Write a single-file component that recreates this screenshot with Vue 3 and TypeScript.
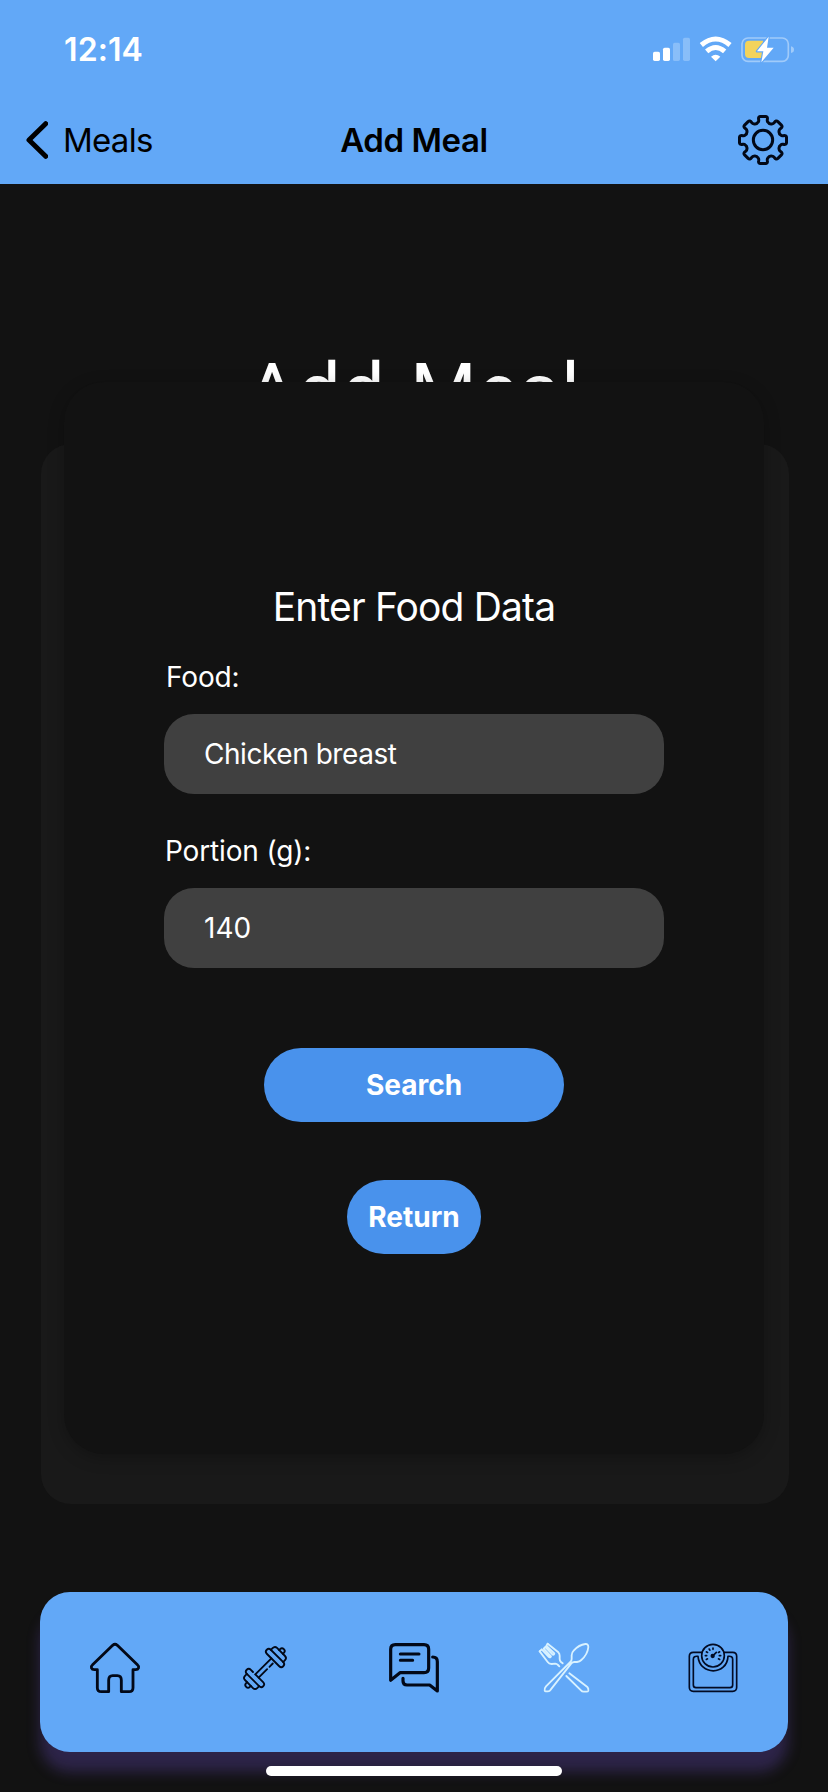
<script setup lang="ts">
import { ref } from 'vue'

const food = ref<string>('Chicken breast')
const portion = ref<string>('140')
const cogAngles: number[] = [0, 45, 90, 135, 180, 225, 270, 315]
const tickAngles: number[] = [-120, -90, -60, -30, 0, 60, 90, 120]

// One outline tooth spans 45 degrees of the cog; eight of them close the ring.
function cogPath(): string {
  const point = (radius: number, degrees: number): string => {
    const t = (degrees * Math.PI) / 180
    return `${(75 + radius * Math.sin(t)).toFixed(2)} ${(75 - radius * Math.cos(t)).toFixed(2)}`
  }
  const parts: string[] = []
  cogAngles.forEach((a, i) => {
    parts.push(`${i === 0 ? 'M' : 'L'}${point(56, a - 15)}`)
    parts.push(`Q${point(57, a - 12.5)} ${point(62, a - 12)}`)
    parts.push(`Q${point(72, a - 12)} ${point(71, a - 6)}`)
    parts.push(`L${point(71, a + 6)}`)
    parts.push(`Q${point(72, a + 12)} ${point(62, a + 12)}`)
    parts.push(`Q${point(57, a + 12.5)} ${point(56, a + 15)}`)
    parts.push(`Q${point(50, a + 22.5)} ${point(56, a + 30)}`)
  })
  return parts.join(' ') + 'Z'
}
</script>

<template>
  <div class="screen">
    <header class="top">
      <div class="status">
        <span class="time">12:14</span>
        <svg class="signals" viewBox="0 0 424 75" width="141.33" height="25">
          <g fill="#fff">
            <rect x="0" y="44" width="21" height="28" rx="5" />
            <rect x="30" y="32" width="21" height="40" rx="5" />
            <g opacity=".25">
              <rect x="60" y="17" width="21" height="55" rx="5" />
              <rect x="90" y="2" width="21" height="70" rx="5" />
            </g>
            <path d="M188 73 L174 59 Q188 48 202 59Z" />
          </g>
          <g fill="none" stroke="#fff" stroke-width="15">
            <path d="M145 24 Q188 -12 231 24" />
            <path d="M161 43 Q188 20 215 43" />
          </g>
          <rect x="267" y="3" width="139" height="70" rx="18" fill="none" stroke="#fff" stroke-opacity=".4" stroke-width="5" />
          <path d="M414 28 Q423 30 423 38 Q423 46 414 48Z" fill="#fff" opacity=".4" />
          <path d="M288 11 H330 V63 H288 Q276 63 276 51 V23 Q276 11 288 11Z" fill="#f3d35c" />
          <path d="M347 -1 L312 43 H331 L325 76 L362 32 H342Z" fill="#fff" stroke="#62a8f7" stroke-width="7" stroke-linejoin="round" paint-order="stroke" />
        </svg>
      </div>
      <nav class="titlebar">
        <button class="back" type="button">
          <svg viewBox="0 0 66 114" width="22" height="38">
            <path d="M59 8 L9 57 L59 106" fill="none" stroke="#000" stroke-width="15" stroke-linecap="round" stroke-linejoin="round" />
          </svg>
          <span>Meals</span>
        </button>
        <h1 class="heading">Add Meal</h1>
        <svg class="cog" viewBox="0 0 150 150" width="50" height="50">
          <g fill="none" stroke="#020817" stroke-width="9" stroke-linejoin="round">
            <path :d="cogPath()" />
            <circle cx="75" cy="75" r="29" />
          </g>
        </svg>
      </nav>
    </header>

    <main class="body">
      <h2 class="page-title">Add Meal</h2>
      <section class="card"></section>
      <form class="modal" @submit.prevent>
        <h3 class="form-title">Enter Food Data</h3>
        <label class="label" for="food">Food:</label>
        <input id="food" v-model="food" class="field" type="text" />
        <label class="label second" for="portion">Portion (g):</label>
        <input id="portion" v-model="portion" class="field number" type="text" />
        <button class="action search" type="submit">Search</button>
        <button class="action return" type="button">Return</button>
      </form>
    </main>

    <footer class="tabs">
      <svg class="tab" viewBox="0 0 150 150">
        <path d="M22 80 V134 Q22 146 34 146 H56 V112 Q56 98 68 98 H82 Q94 98 94 112 V146 H117 Q129 146 129 134 V80 H137 C146 80 149 71 143 66 L82 7 Q75 1 68 7 L7 66 C1 71 4 80 13 80Z" fill="none" stroke="#020817" stroke-width="8.5" stroke-linejoin="round" />
      </svg>
      <svg class="tab" viewBox="0 0 150 150">
        <g transform="translate(78 75) rotate(-45)" fill="none" stroke="#020817" stroke-width="5.5" stroke-linecap="round">
          <path d="M-34 -7 H34 M-34 7 H2 M12 7 H26" />
          <rect x="34" y="-35" width="17" height="70" rx="8.5" />
          <path d="M51 -26 H58 Q68 -26 68 -17 V17 Q68 26 58 26 H51" />
          <path d="M68 -8 H72 Q80 -8 80 0 Q80 8 72 8 H68" />
          <path d="M-34 -17 V-26 Q-34 -35 -42.5 -35 Q-51 -35 -51 -26 V26 Q-51 35 -42.5 35 Q-34 35 -34 26 V-7" />
          <path d="M-51 -26 H-58 Q-68 -26 -68 -17 V17 Q-68 26 -58 26 H-51" />
          <path d="M-68 -8 H-72 Q-80 -8 -80 0 Q-80 8 -72 8 H-68" />
        </g>
      </svg>
      <svg class="tab" viewBox="0 0 150 150">
        <g fill="none" stroke="#020817" stroke-width="9.5" stroke-linecap="round" stroke-linejoin="round">
          <path d="M5 112 V19 Q5 5 19 5 H105 Q119 5 119 19 V75 Q119 89 105 89 H33Z" />
          <path d="M34 33 H90 M34 52 H71" stroke-width="9" />
          <path d="M131 42 Q145 42 145 56 V144 L122 126 H54 Q42 126 42 114 V106" />
        </g>
      </svg>
      <svg class="tab" viewBox="0 0 150 150">
        <g fill="none" stroke="#d9f2ff" stroke-width="5.5" stroke-linecap="round" stroke-linejoin="round">
          <path d="M2 25 L26 57 Q30 63 38 63 L49 62 Q53 62 57 66 L61 70 M26 2 L58 28 Q62 32 62 38 V48 Q62 53 66 57 L71 61" />
          <path d="M2 25 L8 19 L30 42 Q35 45 36 40 L14 17 L19 12 L41 35 Q46 36 46 31 L22 8 L26 2" />
          <path d="M17 143 Q15 137 21 130 L94 57 Q98 53 98 48 V37 Q98 29 104 23 Q120 5 139 3 Q148 2 148 12 Q146 34 127 51 Q122 56 114 57 H106 Q101 57 97 61 L35 140 Q32 145 27 145 H20 Q18 145 17 143Z" />
          <path d="M91 91 L145 132 Q149 136 148 143 Q147 146 142 146 H134 Q129 146 126 142 L82 99" />
        </g>
      </svg>
      <svg class="tab" viewBox="0 0 150 150">
        <g fill="none" stroke="#020b24" stroke-width="5" stroke-linecap="round" stroke-linejoin="round">
          <path d="M42 28 H16 Q4 28 4 40 V133 Q4 145 16 145 H134 Q146 145 146 133 V40 Q146 28 134 28 H108" />
          <path d="M30 40 Q16 38 16 49 V126 Q16 134 24 134 H126 Q134 134 134 126 V49 Q134 38 120 40 C117 98 35 98 30 40Z" />
          <circle cx="75" cy="38" r="34" fill="#62a8f7" />
          <g v-for="angle in tickAngles" :key="angle" :transform="`rotate(${angle} 75 38)`">
            <path d="M75 15 V19" />
          </g>
          <path d="M75 38 L85 28" />
          <circle cx="74" cy="39" r="4" fill="#020b24" />
        </g>
      </svg>
    </footer>
    <div class="home-indicator"></div>
  </div>
</template>

<style>
body {
  background: #121212;
}
</style>

<style scoped>
.screen {
  width: 828px;
  height: 1792px;
  box-sizing: border-box;
  overflow: hidden;
  display: flex;
  flex-direction: column;
  background: #121212;
  color: #fff;
  font-family: Inter, "Liberation Sans", sans-serif;
}
.top {
  height: 184px;
  flex: none;
  background: #62a8f7;
}
.status {
  height: 96px;
  display: flex;
  align-items: flex-start;
  justify-content: space-between;
  padding: 0 34px 0 64px;
  box-sizing: border-box;
}
.time {
  margin-top: 30px;
  font-size: 32px;
  line-height: 40px;
  font-weight: 600;
  letter-spacing: 0.1px;
}
.signals {
  margin-top: 37px;
  overflow: visible;
}
.titlebar {
  height: 88px;
  display: grid;
  grid-template-columns: 1fr auto 1fr;
  align-items: center;
  padding: 0 26px;
  color: #000;
}
.back {
  display: flex;
  align-items: center;
  gap: 15px;
  padding: 0;
  border: 0;
  background: none;
  font: 400 33px/40px Inter, sans-serif;
  letter-spacing: -0.75px;
  color: #000;
}
.heading {
  margin: 0;
  font-size: 33px;
  line-height: 40px;
  font-weight: 600;
  letter-spacing: -0.4px;
}
.cog {
  justify-self: end;
  margin-right: 14px;
}
.body {
  height: 1408px;
  flex: none;
  display: grid;
  grid-template-rows: 260px 1060px;
  justify-items: center;
}
.page-title {
  grid-area: 1 / 1;
  margin: 161px 0 0;
  font-family: Roboto, Inter, sans-serif;
  font-size: 76px;
  line-height: 92px;
  font-weight: 400;
  letter-spacing: 1px;
  word-spacing: 5px;
  white-space: nowrap;
}
.card {
  grid-area: 2 / 1;
  width: 748px;
  margin-left: 2px;
  border-radius: 30px;
  background: #191919;
}
.modal {
  grid-area: 1 / 1 / 3 / 2;
  z-index: 1;
  width: 700px;
  height: 1072px;
  margin-top: 198px;
  padding: 200px 100px 0;
  box-sizing: border-box;
  display: flex;
  flex-direction: column;
  align-items: center;
  border-radius: 40px;
  background: #121212;
  box-shadow: 0 4px 16px rgba(0, 0, 0, 0.25);
}
.form-title {
  margin: 0;
  font-size: 39px;
  line-height: 50px;
  font-weight: 400;
  letter-spacing: -0.85px;
  white-space: nowrap;
}
.label {
  width: 100%;
  margin-top: 28px;
  padding-left: 2px;
  box-sizing: border-box;
  font-size: 28px;
  line-height: 34px;
  letter-spacing: -0.15px;
}
.second {
  margin-top: 40px;
  padding-left: 1px;
}
.field {
  width: 500px;
  height: 80px;
  flex: none;
  margin-top: 20px;
  padding: 0 40px;
  box-sizing: border-box;
  border: 0;
  border-radius: 30px;
  background: #404040;
  color: #fff;
  font: 400 28px/34px Inter, sans-serif;
  letter-spacing: -0.45px;
}
.number {
  letter-spacing: 0;
}
.action {
  height: 74px;
  flex: none;
  padding: 0;
  border: 0;
  border-radius: 37px;
  background: #4992ec;
  color: #fff;
  font: 700 28px/34px Inter, sans-serif;
}
.search {
  width: 300px;
  margin-top: 80px;
}
.return {
  width: 134px;
  margin-top: 58px;
}
.tabs {
  width: 748px;
  height: 160px;
  flex: none;
  margin: 0 40px;
  display: grid;
  grid-template-columns: repeat(5, 1fr);
  align-items: center;
  justify-items: center;
  padding-bottom: 8px;
  box-sizing: border-box;
  border-radius: 30px;
  background: #62a8f7;
  box-shadow: 0 20px 14px rgba(127, 93, 240, 0.25);
}
.tab {
  width: 50px;
  height: 50px;
  overflow: visible;
}
.home-indicator {
  z-index: 1;
  width: 296px;
  height: 10px;
  flex: none;
  margin: 14px auto 0;
  border-radius: 5px;
  background: #fff;
}
</style>
